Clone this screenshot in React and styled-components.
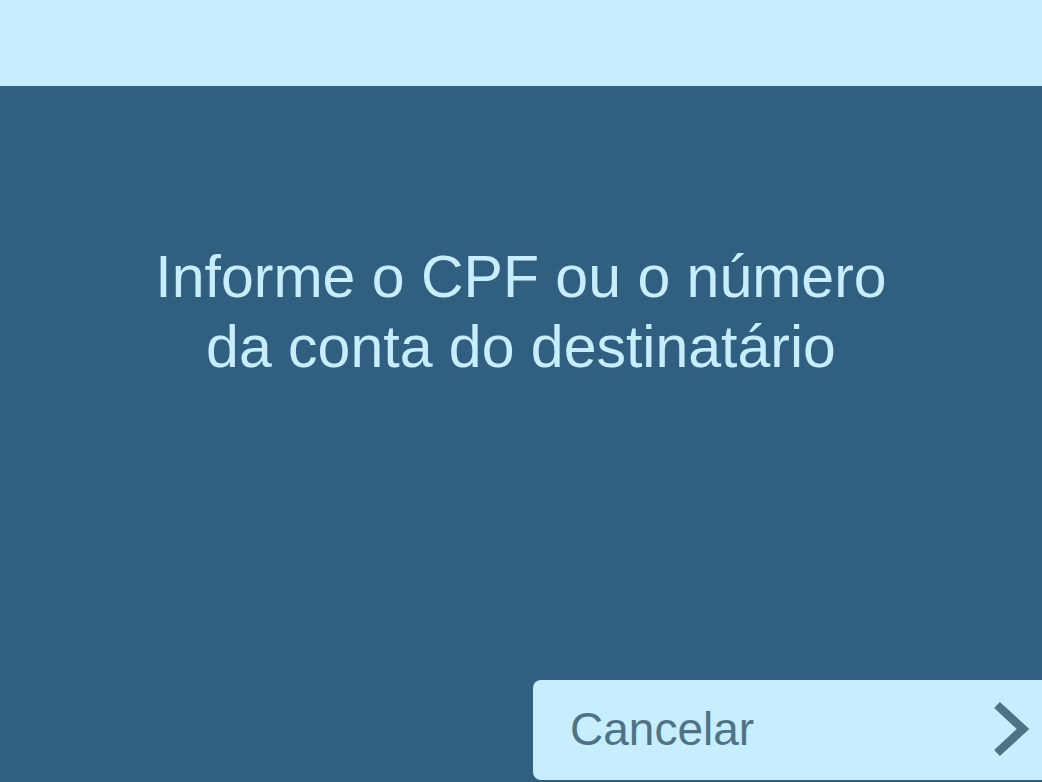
import React from 'react';
import styled, { createGlobalStyle } from 'styled-components';

const GlobalStyle = createGlobalStyle`
  html, body {
    margin: 0;
    padding: 0;
    background: #315f80;
  }
  body {
    font-family: "Liberation Sans", Arial, sans-serif;
  }
`;

const Screen = styled.div`
  width: 1042px;
  height: 782px;
  display: flex;
  flex-direction: column;
  overflow: hidden;
`;

const TopBar = styled.header`
  height: 86px;
  flex-shrink: 0;
  background-color: #c6eefe;
`;

const Main = styled.main`
  flex: 1;
  display: flex;
  flex-direction: column;
  background-color: #315f80;
`;

const Title = styled.h1`
  margin: 0;
  padding-top: 156px;
  font-size: 59px;
  font-weight: normal;
  line-height: 70px;
  color: #c6eeff;
  text-align: center;
`;

const Footer = styled.div`
  margin-top: auto;
  margin-bottom: 2px;
  display: flex;
  justify-content: flex-end;
`;

const ActionButton = styled.div`
  cursor: pointer;
  width: 509px;
  height: 100px;
  box-sizing: border-box;
  padding: 0 12px 2px 37px;
  display: flex;
  align-items: center;
  justify-content: space-between;
  background-color: #c6eeff;
  border-radius: 8px 0 0 8px;
  color: #4e7386;
  font-size: 46px;
  line-height: 1;
`;

const Chevron = () => (
  <svg width="38" height="58" viewBox="0 0 38 58">
    <polyline points="5,5 31,29 5,53" fill="none" stroke="#4e7386" strokeWidth="8.5" />
  </svg>
);

const App = () => (
  <>
    <GlobalStyle />
    <Screen>
      <TopBar />
      <Main>
        <Title>
          Informe o CPF ou o número
          <br />
          da conta do destinatário
        </Title>
        <Footer>
          <ActionButton>
            Cancelar
            <Chevron />
          </ActionButton>
        </Footer>
      </Main>
    </Screen>
  </>
);

export default App;
